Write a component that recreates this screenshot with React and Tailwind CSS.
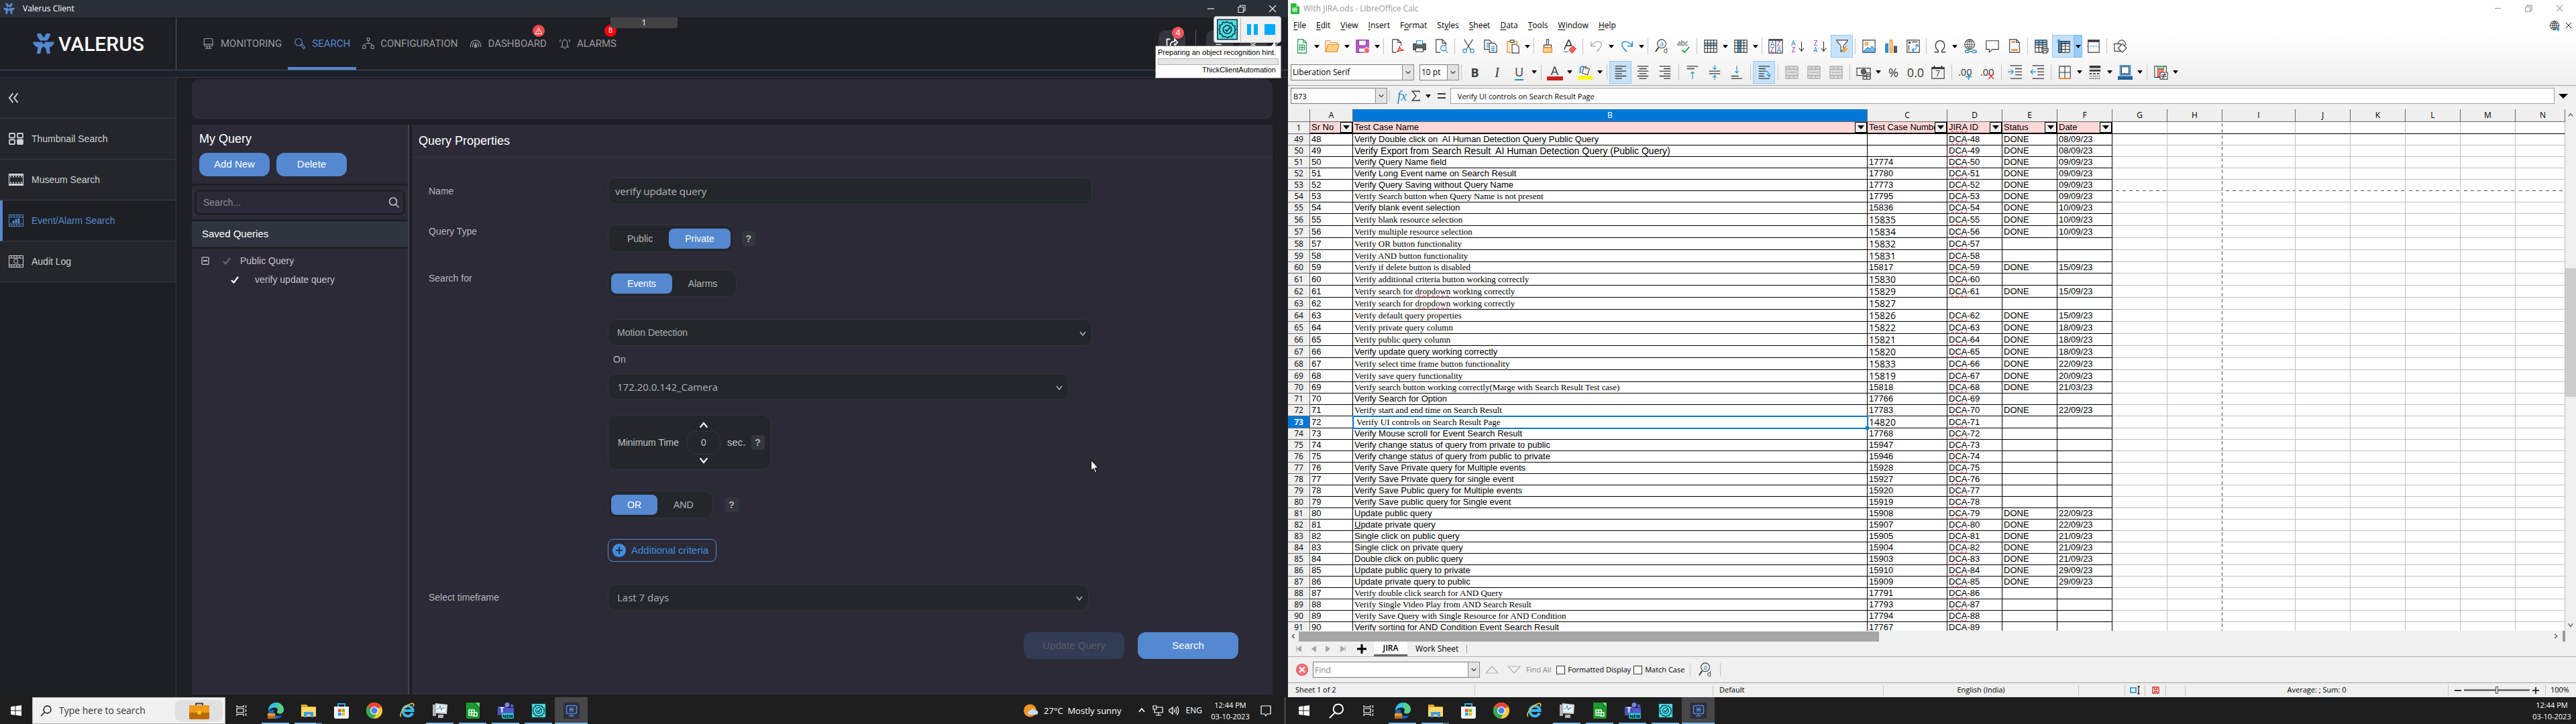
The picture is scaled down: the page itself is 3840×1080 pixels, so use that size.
import React from "react";

const SEG = "font-['Open_Sans',sans-serif]";

/* ---------- shared icon helpers ---------- */
function Ic({ children, className = "w-6 h-6", vb = "0 0 24 24", sw = 1.2 }) {
  return (
    <svg viewBox={vb} className={className + " shrink-0 overflow-visible"} fill="none" stroke="currentColor" strokeWidth={sw} aria-hidden="true">
      {children}
    </svg>
  );
}
const B = "#1e8bcd";
const K = "#3a3a38";

function ValerusMark({ className }) {
  return (
    <svg viewBox="0 0 32 30" className={className} fill="#5488d0" aria-hidden="true">
      <path d="M6 0h6l4 6.500L20 0h6c-.6 5-2.600 8.500-5.500 10.800h-9C8.600 8.500 6.600 5 6 0z" />
      <path d="M0 12.500h13.500L16 16v3l-3.200 3.500L11 30H6l1.300-9.500C3.500 19.500.8 17 0 12.500z" />
      <path d="M32 12.500H18.500L16 16v3l3.200 3.500L21 30h5l-1.300-9.500c3.800-1 6.500-3.500 7.300-8z" />
      <path d="M12.500 10.800L16 15l3.500-4.200z" fill="#1e1f24" />
    </svg>
  );
}

function Gear({ className }) {
  return (
    <svg viewBox="0 0 30 30" className={className} fill="none" stroke="#12404a" aria-hidden="true">
      <rect x="0.750" y="0.750" width="28.500" height="28.500" fill="#4fe0e6" stroke="#0e3440" strokeWidth="1.500" />
      <path d="M15 4l3 2 3.500-.5 1.200 3.300 3.300 1.200-.5 3.500L27 15l-1.500 2.500.5 3.500-3.300 1.200-1.200 3.300L18 25l-3 2-3-2-3.500.5-1.200-3.300L4 21l.5-3.500L3 15l1.500-2.500L4 9l3.300-1.200L8.500 4.500 12 5z" strokeWidth="1.700" />
      <circle cx="15" cy="15" r="6" strokeWidth="1.700" />
      <path d="M12 15l2.300 2.500L19 12" strokeWidth="1.900" />
    </svg>
  );
}

const Chev = ({ className = "w-3 h-3", d = "M2 4l4 4 4-4" }) => (
  <svg viewBox="0 0 12 12" className={className} fill="none" stroke="currentColor" strokeWidth="1.600" aria-hidden="true">
    <path d={d} />
  </svg>
);
const UP = "M2 8l4-5 4 5";
const DOWN = "M2 4l4 5 4-5";

/* ---------- Valerus client ---------- */
const NAV = [
  {
    t: "MONITORING",
    i: <><rect x="3" y="2" width="17" height="15" rx="2.500" /><path d="M3 13.500h17M9 17v4M14 17v4M5 21.500h13" /></>,
  },
  { t: "SEARCH", on: true, i: <><circle cx="9.500" cy="9" r="7" /><path d="M14 14.500l3-1 5 6-2 2.500-5-5z" /></> },
  {
    t: "CONFIGURATION",
    i: <><rect x="9.500" y="1" width="5" height="5" rx="1" /><rect x="1" y="16" width="5.500" height="6" rx="1" /><rect x="17.500" y="16" width="5.500" height="6" rx="1" /><path d="M12 6v5M4 16c0-3 3-4.500 8-5 5 .5 8 2 8 5" /></>,
  },
  {
    t: "DASHBOARD",
    badge: "tri",
    i: <><path d="M2 19v-4a10 9.500 0 0 1 20 0v4M6 19v-3.500a6 6 0 0 1 3-5M18 19v-3.500a6 6 0 0 0-3-5" /><circle cx="12" cy="17" r="2.500" fill="currentColor" /><path d="M12 15V9" strokeWidth="2" /></>,
  },
  {
    t: "ALARMS",
    badge: "8",
    i: <><path d="M7 17V10a5 5 0 0 1 10 0v7l2 2H5zM12 5V2.500M10.500 22h3M4 4C2.500 5.500 2 7 2 9M20 4c1.500 1.500 2 3 2 5" /></>,
  },
];

const Film = ({ children }) => (
  <Ic className="w-[22px] h-[18px]" vb="0 0 22 18" sw={1}>
    <rect x="0.500" y="0.500" width="21" height="17" />
    <path d="M0 4h22M0 14h22M4 0v4M8 0v4M12 0v4M16 0v4M4 14v4M8 14v4M12 14v4M16 14v4" />
    {children}
  </Ic>
);
const SIDE = [
  {
    t: "Thumbnail Search",
    i: (
      <Ic className="w-[22px] h-[18px]" vb="0 0 22 18" sw={1.8}>
        <rect x="1" y="1" width="8" height="6.500" rx="1" /><rect x="13" y="1" width="8" height="6.500" rx="1" />
        <rect x="1" y="10.500" width="8" height="6.500" rx="1" /><rect x="13" y="10.500" width="8" height="6.500" rx="1" fill="currentColor" />
      </Ic>
    ),
  },
  {
    t: "Museum Search",
    i: (
      <Ic className="w-[22px] h-[18px]" vb="0 0 22 18" sw={1.2}>
        <path d="M.5 0v18M21.500 0v18" /><path d="M0 1.500h22M0 16.500h22" strokeWidth="3" /><path d="M2 4.500h18M2 13.500h18" strokeDasharray="2 2" strokeWidth="1.800" />
      </Ic>
    ),
  },
  { t: "Event/Alarm Search", on: true, i: <Film><path d="M6 12.500h2v-3H6zM10 12.500h2V7h-2zM14 12.500h2V6h-2z" fill="currentColor" /></Film> },
  { t: "Audit Log", i: <Film><circle cx="10.500" cy="8.500" r="3" /><path d="M12.500 11l2 2" /></Film> },
];

const pill = "h-[30px] rounded-lg px-6 text-sm";
function Toggle({ label, items, active }) {
  return (
    <div role="group" aria-label={label} className="flex h-[41px] items-center rounded-xl border border-[#34343c] bg-[#23272b] px-1">
      {items.map((t) => (
        <button key={t} aria-pressed={t === active} className={pill + (t === active ? " bg-[#5488d0] text-white" : " text-[#b4b5b8]")}>
          {t}
        </button>
      ))}
    </div>
  );
}
const Help = ({ ml = "" }) => (
  <button aria-label="Help" className={"h-[22px] w-5 rounded bg-[#33373d] text-sm font-bold text-[#b4b5b8] " + ml}>?</button>
);
function DarkSelect({ id, label, value, width, font = "" }) {
  return (
    <div className={"relative max-w-full text-[#aeb0b3] " + width}>
      <select id={id} aria-label={label} className={"h-10 w-full appearance-none rounded-xl border border-[#34343c] bg-[#23272b] px-[13px] " + font}>
        <option>{value}</option>
      </select>
      <Chev className="pointer-events-none absolute right-2 top-[15px] h-3 w-3" d={DOWN} />
    </div>
  );
}
const Row = ({ label, htmlFor, className, lab = "", children }) => (
  <div className={"grid grid-cols-[267px_1fr] " + className}>
    {label ? <label htmlFor={htmlFor} className={"text-sm leading-5 text-[#b4b5b8] " + lab}>{label}</label> : <span />}
    <div className="flex items-center">{children}</div>
  </div>
);
const blueBtn = "rounded-xl bg-[#5488d0] text-[15px] text-white";

function Valerus() {
  return (
    <section className="relative flex min-h-0 min-w-0 flex-1 flex-col bg-[#1e1f24] font-['Liberation_Sans',sans-serif]">
      <div className={"flex h-[26px] items-center bg-[#2a2e36] pl-1 text-xs text-white " + SEG}>
        <ValerusMark className="h-4 w-[19px]" />
        <span className="ml-[11px]">Valerus Client</span>
        <div className="ml-auto flex text-[#e6e6e6]">
          <button aria-label="Minimize" className="flex w-[46px] justify-center"><Ic className="h-3 w-3" vb="0 0 12 12"><path d="M1 6h10" /></Ic></button>
          <button aria-label="Restore" className="flex w-[46px] justify-center"><Ic className="h-3 w-3" vb="0 0 12 12"><path d="M1 3.500h7.500v8H1zM3.500 3.500V1H11v8H8.500" /></Ic></button>
          <button aria-label="Close" className="flex w-[46px] justify-center"><Ic className="h-3 w-3" vb="0 0 12 12"><path d="M1 1l10 10M11 1L1 11" /></Ic></button>
        </div>
      </div>

      <header className="flex h-[79px] shrink-0 border-b border-[#55546e]">
        <div className="flex w-[263px] items-center border-r border-[#55546e] pl-[49px]">
          <ValerusMark className="h-[30px] w-8" />
          <span className="ml-[6px] font-['Roboto',sans-serif] text-[30px] font-medium text-white">VALERUS</span>
        </div>
        <nav className="flex pl-[30px] font-['Roboto',sans-serif] text-[15px]">
          {NAV.map((n) => (
            <a key={n.t} href="#" className={"relative flex items-center gap-[9px] px-[9px] " + (n.on ? "border-b-4 border-[#5488d0] pt-1 text-[#5488d0]" : "text-[#98999d]")}>
              <Ic className="h-[18px] w-[18px]" sw={1.6}>{n.i}</Ic>
              {n.t}
              {n.badge === "tri" && (
                <span className="absolute right-[12px] top-[11px] flex h-[18px] w-[18px] items-center justify-center rounded-full bg-[#f9484b] text-white">
                  <Ic className="h-3 w-3" sw={2}><path d="M12 3l10 18H2zM12 9v6M12 17v2" /></Ic>
                </span>
              )}
              {n.badge === "8" && (
                <span className="absolute right-[9px] top-[11px] flex h-[18px] w-[18px] items-center justify-center rounded-full bg-[#fb0007] text-[11px] text-white">8</span>
              )}
            </a>
          ))}
        </nav>
        <div className="ml-auto flex items-center pr-3">
          <button aria-label="Export" className="relative flex h-10 w-10 items-center justify-center rounded-xl bg-[#33373d] text-white">
            <Ic className="h-5 w-5" sw={2}><path d="M9 4H3v17h16v-5M9 16c0-6 3-8 8-8V4l5 6-5 5v-4" /></Ic>
            <span className="absolute -top-[5px] right-[2px] flex h-[18px] w-[18px] items-center justify-center rounded-full bg-[#fb5458] text-[13px]">4</span>
          </button>
          <span className="mx-[15px] h-10 w-px bg-[#55546e]" />
          <button aria-label="Layout" className="flex h-10 w-10 items-center justify-center rounded-xl bg-[#33373d] text-white">
            <Ic className="h-4 w-4" sw={2}><path d="M4 4h4v4H4zM12 4h4v4h-4zM4 14h12" /></Ic>
          </button>
          <button aria-label="User" className="ml-[10px] flex h-10 w-10 items-center justify-center rounded-xl bg-[#33373d] text-white">
            <Ic className="h-4 w-4" sw={2}><circle cx="12" cy="7" r="6" /><path d="M2 23c2-10 18-10 20 0" /></Ic>
          </button>
          <Chev className="ml-2 h-3 w-3 text-[#b4b5b8]" />
        </div>
      </header>
      <div className="h-[11px] shrink-0 border-b border-[#35363d] bg-[#1c2027]" />

      <div className="flex min-h-0 flex-1">
        <aside className="w-[263px] shrink-0 border-r border-[#3a3a41]">
          <button aria-label="Collapse" className="flex h-[61px] w-full items-center border-b border-[#393b41] bg-[#23272b] pl-3 text-[#d4d5d7]">
            <Ic className="h-4 w-4" vb="0 0 16 16" sw={2}><path d="M7.500 1L2 8l5.500 7M14.500 1L9 8l5.500 7" /></Ic>
          </button>
          {SIDE.map((s) => (
            <a key={s.t} href="#" className={"flex h-[61px] items-center gap-3 border-b border-[#393b41] text-sm " + (s.on ? "border-l-4 border-l-[#5488d0] bg-[#1e1f24] pl-[9px] text-[#5488d0]" : "bg-[#23272b] pl-[13px] text-[#cfd0d2]")}>
              {s.i}
              {s.t}
            </a>
          ))}
        </aside>

        <main className="flex min-w-0 flex-1 flex-col pb-1 pl-[23px] pr-[23px] pt-[2px]">
          <div className="h-[60px] shrink-0 rounded-xl bg-[#2c2a37]" />
          <div className="mt-2 flex min-h-0 flex-1">
            <section className="w-[322px] shrink-0 bg-[#2c2a37] text-[#c3c3c8]">
              <h2 className="pl-[11px] pt-[9px] text-lg leading-6 text-white">My Query</h2>
              <div className="mt-[9px] flex gap-[10px] pl-[11px]">
                <button className={blueBtn + " h-[35px] w-[105px]"}>Add New</button>
                <button className={blueBtn + " h-[35px] w-[105px]"}>Delete</button>
              </div>
              <div className="mt-[11px] border-y-[3px] border-[#1e1f24] px-1 py-[6px]">
                <div className="flex h-[38px] items-center rounded-lg border-[3px] border-[#1e1f24] pl-[10px] pr-[6px]">
                  <input aria-label="Search queries" placeholder="Search..." className="min-w-0 flex-1 bg-transparent text-sm placeholder:text-[#8e8e96]" />
                  <Ic className="h-4 w-4 text-[#c3c3c8]" vb="0 0 16 16" sw={1.6}><circle cx="7" cy="6.500" r="5.500" /><path d="M11 11l4.500 4.500" /></Ic>
                </div>
              </div>
              <h3 className="flex h-[38px] items-center bg-[#30343e] pl-[15px] text-[15px] text-white">Saved Queries</h3>
              <div className="border-t-[3px] border-[#1e1f24]">
                <div className="mt-1 flex h-7 items-center pl-[14px] text-sm">
                  <Ic className="h-3 w-3 text-[#c3c3c8]" vb="0 0 12 12" sw={1.3}><rect x="1" y="0.800" width="10" height="10.500" rx="1" /><path d="M3 6h6" strokeWidth="2" /></Ic>
                  <Ic className="ml-5 mr-[14px] h-3 w-3 text-[#6e6e77]" vb="0 0 12 12" sw={2}><path d="M1 7l3.500 3.500L11 2" /></Ic>
                  Public Query
                </div>
                <div className="flex h-7 items-center pl-[58px] text-sm">
                  <Ic className="mr-6 h-3 w-3 text-white" vb="0 0 12 12" sw={2.2}><path d="M1 7l3.500 3.500L11 2" /></Ic>
                  verify update query
                </div>
              </div>
            </section>
            <div className="w-[6px] shrink-0 border-l-2 border-[#45454c]" />

            <section className="min-w-0 flex-1 bg-[#2c2a37]">
              <h2 className="flex h-[49px] items-center border-b border-[#38383f] pl-[10px] text-lg text-white">Query Properties</h2>
              <div className="pl-[25px] pr-[51px]">
                <Row label="Name" htmlFor="qname" className="mt-[30px]" lab="self-center">
                  <input id="qname" defaultValue="verify update query" className={"h-10 w-[722px] rounded-xl border border-[#34343c] bg-[#23272b] px-[10px] text-[15px] text-[#b4b5b8] " + SEG} />
                </Row>
                <Row label="Query Type" className="mt-[30px]">
                  <Toggle label="Query Type" items={["Public", "Private"]} active="Private" />
                  <Help ml="ml-3" />
                </Row>
                <Row label="Search for" className="mt-[26px]" lab="pt-[3px]">
                  <Toggle label="Search for" items={["Events", "Alarms"]} active="Events" />
                </Row>
                <Row className="mt-[33px]">
                  <DarkSelect id="ev" label="Event" value="Motion Detection" width="w-[722px]" font="text-sm" />
                </Row>
                <Row className="mt-[10px]">
                  <span className="pl-2 text-sm leading-5 text-[#b4b5b8]">On</span>
                </Row>
                <Row className="mt-[11px]">
                  <DarkSelect id="cam" label="Camera" value="172.20.0.142_Camera" width="w-[687px]" font={"text-[15px] " + SEG} />
                </Row>
                <Row className="mt-[22px]">
                  <div className="flex h-[82px] items-center rounded-xl border border-[#34343c] bg-[#23272b] pl-[14px] pr-2 text-sm text-[#c3c3c8]">
                    <label htmlFor="mint">Minimum Time</label>
                    <div className="ml-3 flex w-[50px] flex-col items-center text-white">
                      <button aria-label="Increase"><Chev className="h-4 w-4" d={UP} /></button>
                      <input id="mint" defaultValue="0" className="h-[35px] w-full rounded-xl border border-[#34343c] bg-transparent text-center text-[#c3c3c8]" />
                      <button aria-label="Decrease"><Chev className="h-4 w-4" d={DOWN} /></button>
                    </div>
                    <span className="ml-[10px] text-[15px]">sec.</span>
                    <Help ml="ml-2" />
                  </div>
                </Row>
                <Row className="mt-[31px]">
                  <Toggle label="Operator" items={["OR", "AND"]} active="OR" />
                  <Help ml="ml-[18px]" />
                </Row>
                <Row className="mt-[31px]">
                  <button className="flex h-[34px] items-center gap-2 rounded-lg border border-[#5488d0] pl-[6px] pr-[11px] text-[15px] text-[#3f8ddf]">
                    <Ic className="h-5 w-5" vb="0 0 20 20"><circle cx="10" cy="10" r="9.500" fill="#3f8ddf" /><path d="M10 5v10M5 10h10" stroke="#2c2a37" strokeWidth="2" /></Ic>
                    Additional criteria
                  </button>
                </Row>
                <Row label="Select timeframe" htmlFor="tf" className="mt-[33px]" lab="self-center">
                  <DarkSelect id="tf" label="Select timeframe" value="Last 7 days" width="w-[717px]" font={"text-[15px] " + SEG} />
                </Row>
                <div className="mt-8 flex justify-end gap-5">
                  <button disabled className="h-10 w-[150px] rounded-xl bg-[#323c56] text-[15px] text-[#5c5a60]">Update Query</button>
                  <button className={blueBtn + " h-10 w-[150px]"}>Search</button>
                </div>
              </div>
            </section>
          </div>
        </main>
      </div>

      <div className={"absolute left-1/2 top-[26px] h-4 w-[100px] -translate-x-1/2 rounded-b bg-[#424245] text-center text-xs leading-4 text-white " + SEG}>1</div>

      <div className="absolute right-[10px] top-6 flex h-10 w-[101px] items-center rounded-sm border border-[#b5b5b5] bg-[#f0f0f0] pl-1">
        <Gear className="h-8 w-[31px]" />
        <span className="mx-1 h-9 w-px bg-[#b5b5b5]" />
        <button aria-label="Pause" className="ml-[5px] flex h-4 w-4 gap-1"><span className="h-4 flex-1 bg-[#00aaff]" /><span className="h-4 flex-1 bg-[#00aaff]" /></button>
        <button aria-label="Stop" className="ml-[10px] h-4 w-4 bg-[#00aaff]" />
      </div>
      <div className="absolute right-[10px] top-[68px] h-[49px] w-[188px] border border-[#7a7a7a] bg-white px-[3px] text-[11px] text-black">
        <svg viewBox="0 0 12 8" className="absolute -top-[7px] right-1 h-2 w-3" fill="#fff" aria-hidden="true"><path d="M1 8L8 0v8z" /></svg>
        <p className="whitespace-nowrap pr-1 text-right leading-[18px]">Preparing an object recognition hint.</p>
        <div className="h-[10px] border border-[#b5b5b5] bg-[#e6e6e6]" />
        <p className="pr-1 text-right leading-[14px]">ThickClientAutomation</p>
      </div>
      <svg viewBox="0 0 12 20" className="absolute left-[1626px] top-[686px] h-5 w-3" fill="#fff" stroke="#000" strokeWidth="1" aria-hidden="true">
        <path d="M.5.5v15.500l3.500-3.300 2.600 6.500 2.200-1-2.600-6.200h4.800z" />
      </svg>
    </section>
  );
}

/* ---------- Calc toolbars ---------- */
const Az = ({ x, y, c, children }) => <text x={x} y={y} fontSize="11" fill={c} stroke="none" fontFamily="Open Sans, sans-serif">{children}</text>;
const grid = "M2 6.500h20M2 11h20M2 15.500h20M7 2v20M12 2v20M17 2v20";
const findIcon = <><circle cx="12" cy="8" r="7" /><path d="M7 14l-5 7" strokeWidth="2.200" /><Az x="9" y="12" c={B}>a</Az><Az x="15" y="23" c={K}>d</Az></>;
const T1 = [
  ["New", <g stroke="#18a05a"><path d="M5 1h9l5 5v17H5zM14 1v5h5" stroke="#1a8f4c" /><path d="M8 10h8v8H8zM8 14h8M12 10v8" /></g>], "a",
  ["Open", <g stroke="#e8862d"><path d="M1 21V3h7l2 3h10v3" fill="#fff3dd" /><path d="M1 21L5 9h18l-3 12z" fill="#fbd283" /></g>], "a",
  ["Save", <g stroke="#8d2f9f"><path d="M2 2h20v20H2z" fill="#b864c8" /><path d="M6 2h12v9H6z" fill="#fff" /><path d="M6 15h10v7H6z" fill="#fff" /><circle cx="19" cy="19" r="4.500" fill="#f2666d" stroke="#fff" /></g>], "a", "|",
  ["Export as PDF", <><path d="M4 1h9l5 5v5M13 1v5h5M4 1v21h6" /><path d="M11 21c3-2 5-7 4.500-9 0 4 3 6 7 6.500-5 0-8 1-11.500 2.500z" stroke="#e03c31" strokeWidth="1.600" /></>],
  ["Print", <><path d="M2 8h20v10H2z" fill="#636361" /><path d="M7 3h10v6H7z" stroke={B} fill="#fff" /><path d="M6 15h12v6H6z" fill="#fff" /></>],
  ["Print Preview", <><path d="M10 22H3V1h10l6 6v4M13 1v6h6" /><circle cx="15" cy="15" r="4.500" stroke={B} fill="#eaf5fc" /><path d="M18 18.500l4 4" stroke={B} /></>], "|",
  ["Cut", <><path d="M5 1l11 17M19 1L8 18" /><g stroke={B}><circle cx="6" cy="19.500" r="3" /><circle cx="18" cy="19.500" r="3" /></g></>],
  ["Copy", <><path d="M9 17H2V2h8l4 4" /><path d="M10 7h8l4 4v11H10z" fill="#fff" /><path d="M13 13h6M13 16h6M13 19h6M5 7h4M5 10h4M5 13h4" stroke={B} /></>],
  ["Paste", <><path d="M9 22H3V4h16v4" stroke="#e8862d" fill="#fdeccb" /><path d="M8 2h6v4H8z" fill="#fff" /><path d="M11 9h7l4 4v10H11z" fill="#fff" /></>], "a", "|",
  ["Clone Formatting", <><path d="M10.500 1h3v9h-3zM6 10h12v4H6z" fill="#fff" /><path d="M5 14h14v8H5z" fill="#fbd283" stroke="#e8862d" /></>],
  ["Clear Formatting", <><path d="M3 17L10 2h1l4 10M6 11h8" strokeWidth="1.800" /><path d="M2 21h8" stroke={B} /><path d="M11 18l6-6 5 4-6 7z" fill="#f2666d" stroke="#d33" /></>], "|",
  ["Undo", <path d="M3 4v8h8M3 12C8 3 19 2 20 9c0 5-5 8-8 12" stroke="#b4b4b4" strokeWidth="1.600" />], "a",
  ["Redo", <path d="M21 4v8h-8M21 12C16 3 5 2 4 9c0 5 5 8 8 12" stroke={B} strokeWidth="1.600" />], "a", "|",
  ["Find & Replace", findIcon],
  ["Spelling", <><Az x="1" y="11" c={K}>abc</Az><path d="M9 18l4 4 8-9" stroke="#28a05a" strokeWidth="2" /></>], "|",
  ["Row", <><path d="M2 7h20v5H2z" fill="#7cc0f0" stroke="none" /><path d="M2 2h20v20H2z" /><path d={grid} /></>], "a",
  ["Column", <><path d="M7 2h6v20H7z" fill="#4aa8e8" stroke="none" /><path d="M2 2h20v20H2z" /><path d={grid} /></>], "a", "|",
  ["Sort", <><path d="M1 1h22v22H1zM12 2v21" /><path d="M1 2h22" strokeWidth="2" /><Az x="3" y="12" c={B}>A</Az><Az x="14" y="12" c="#a33bb5">Z</Az><Az x="3" y="22" c="#a33bb5">Z</Az><Az x="14" y="22" c={B}>A</Az></>],
  ["Sort Ascending", <><Az x="1" y="11" c={B}>A</Az><Az x="2" y="22" c="#a33bb5">Z</Az><path d="M18 4v16M14 15l4 5 4-5" /></>],
  ["Sort Descending", <><Az x="2" y="11" c="#a33bb5">Z</Az><Az x="1" y="22" c={B}>A</Az><path d="M18 4v16M14 15l4 5 4-5" /></>],
  ["AutoFilter", <><path d="M3 2h18c-1 5-7 7-7 10v6l-4 3v-9C10 9 4 7 3 2z" fill="#fff" /><path d="M19 11l-7 7h4l-2 5 7-7h-4z" fill="#fbb03b" stroke="#e8862d" strokeWidth=".8" /></>, "on"], "|",
  ["Image", <><path d="M2 2h20v20H2z" /><circle cx="8" cy="8" r="2.500" stroke="#e8862d" fill="#fbd283" /><path d="M3 21l7-7 3 3 4-5 5 6v3z" fill="#7cc0f0" stroke={B} /></>],
  ["Chart", <><path d="M3 8h4v14H3z" fill="#2f8fd8" stroke={B} /><path d="M10 2h4v20h-4z" fill="#fbd283" stroke="#e8862d" /><path d="M17 12h4v10h-4z" fill="#636361" /></>],
  ["Pivot Table", <><path d="M2 2h20v20H2z" /><path d="M5 5h2v2H5zM10 5h9M5 10v9" /><path d="M10 18c5 1 8-2 8-8M13 15l-3 3 3 3M15 12l3-3 3 3" stroke={B} /></>], "|",
  ["Special Character", <path d="M3 21.500h6v-3C2 14 4 3 12 3s10 11 3 15.500v3h6" strokeWidth="1.500" />], "a",
  ["Hyperlink", <><circle cx="11" cy="9" r="8" /><path d="M3 9h16M11 1v16M5 4.500h12M5 13h12M11 1C6 5 6 13 11 17M11 1c5 4 5 12 0 16" strokeWidth=".9" /><path d="M10 18.500h-4a2 2 0 0 0 0 4h4M16 18.500h4a2 2 0 0 1 0 4h-4M9 20.500h8" stroke={B} strokeWidth="1.600" /></>],
  ["Comment", <path d="M2 3h20v14H12l-5 5v-5H2z" />],
  ["Headers and Footers", <><path d="M4 1h11l5 5v16H4zM15 1v5h5" /><path d="M7 5h6M7 18h10" stroke="#e8862d" strokeWidth="2.500" /></>], "|",
  ["Define Print Area", <><path d="M2 2h19v8H2z" fill="#7cc0f0" stroke="none" /><path d="M2 2h19v20H2zM2 6h19M2 10h19M2 14h19M8 2v20M14 2v20" /><path d="M13 16h10v5H13z" fill="#fff" /><path d="M15 13h6v3h-6zM15 19h6v4h-6z" fill="#fff" /></>],
  ["Freeze Rows and Columns", <><path d="M4 4h18v18H4z" fill="#fff" /><path d="M4 4h18v4H4zM4 4h5v18H4z" fill="#4aa8e8" /><path d="M4 12h18M4 17h18M9 4v18M15 4v18" /><path d="M4 0v7M1 1.500l6 4M7 1.500l-6 4" stroke={B} /></>, "on"], "A",
  ["Split Window", <><path d="M3 2h18v20H3z" /><path d="M3 3.500h18" strokeWidth="3.500" /><path d="M1 12h22" stroke={B} strokeDasharray="3 1.500" /></>], "|",
  ["Show Draw Functions", <><circle cx="14" cy="8" r="6" /><path d="M2 8h10v12H2z" fill="#f8f8f8" /><path d="M15 8l7 7-7 7-7-7z" fill="#f8f8f8" /></>],
];
const lines = (a) => <path d={a.map(([x, y, w]) => `M${x} ${y}h${w}`).join("")} strokeWidth="1.500" />;
const merge = <g stroke="#a9a9a9"><path d="M2 2h20v20H2z" fill="#dcdcdc" /><path d="M2 7h20M2 17h20M8 2v5M15 2v5M8 17v5M15 17v5M5 12h14" /></g>;
const decimals = <text x="0" y="17" fontSize="16" fill={K} stroke="none" fontFamily="Open Sans, sans-serif">.00</text>;
const T2 = [
  ["Bold", <span className="text-lg font-bold leading-6">B</span>, "txt"],
  ["Italic", <span className="font-['Liberation_Serif',serif] text-xl italic leading-6">I</span>, "txt"],
  ["Underline", <span className="border-b-2 border-[#1e8bcd] text-lg leading-[22px]">U</span>, "txt"], "a", "|",
  ["Font Color", <span className="flex w-6 flex-col items-center border-b-[6px] border-[#c9211e] text-lg leading-[18px]">A</span>, "txt"], "a",
  ["Highlighting Color", <><path d="M10 3l9 3-3 10-9-3zM13 1v6" /><path d="M4 4v9M4 4c3-2 5-2 6-1" stroke={B} strokeWidth="2" /><path d="M0 20.500h24" stroke="#ff0" strokeWidth="6" /></>], "a", "|",
  ["Align Left", lines([[3, 2, 18], [3, 6, 11], [3, 10, 18], [3, 14, 11], [3, 18, 18], [3, 22, 11]]), "on"],
  ["Align Center", lines([[3, 2, 18], [6, 6, 12], [3, 10, 18], [6, 14, 12], [3, 18, 18], [6, 22, 12]])],
  ["Align Right", lines([[3, 2, 18], [10, 6, 11], [3, 10, 18], [10, 14, 11], [3, 18, 18], [10, 22, 11]])], "|",
  ["Align Top", <>{lines([[3, 2, 18], [3, 6, 12]])}<path d="M12 23V11M9 14l3-3 3 3" stroke={B} /></>],
  ["Center Vertically", <>{lines([[3, 10, 18], [3, 14, 18]])}<path d="M12 0v7M9 4l3 3 3-3M12 24v-7M9 20l3-3 3 3" stroke={B} /></>],
  ["Align Bottom", <>{lines([[3, 18, 12], [3, 22, 18]])}<path d="M12 1v12M9 10l3 3 3-3" stroke={B} /></>], "|",
  ["Wrap Text", <>{lines([[3, 2, 18], [3, 6, 11], [3, 10, 11], [3, 14, 9], [3, 18, 9], [3, 22, 18]])}<path d="M13 10c5 0 7 2 7 8M16 15l4 4 3-4" stroke={B} /></>, "on"], "|",
  ["Merge and Center Cells", merge], ["Merge Cells", merge], ["Unmerge Cells", merge], "|",
  ["Currency", <><path d="M1 5h22v12H1z" /><circle cx="12" cy="11" r="4" fill="#636361" /><path d="M11 19h6v4h-6zM17 13h6v10h-6zM17 16h6M17 19h6" fill="#f4f4f4" /></>], "a",
  ["Percent", <span className="text-lg leading-6">%</span>, "txt"],
  ["Number", <span className="text-lg leading-6">0.0</span>, "txt"],
  ["Date", <><path d="M2 4h20v18H2z" /><path d="M2 5h20" strokeWidth="3.500" /><path d="M6 1v4M18 1v4" strokeWidth="2" /><text x="8" y="19" fontSize="13" fill={K} stroke="none" fontFamily="Open Sans, sans-serif">7</text></>], "|",
  ["Add Decimal Place", <>{decimals}<path d="M17 14v10M12 19h10" stroke={B} strokeWidth="1.600" /></>],
  ["Delete Decimal Place", <>{decimals}<path d="M13 14l9 9M22 14l-9 9" stroke="#e03c31" strokeWidth="1.600" /></>], "|",
  ["Increase Indent", <>{lines([[4, 1, 19], [12, 6, 11], [12, 11, 11], [12, 16, 11], [4, 22, 19]])}<path d="M0 11h9M5 7l4 4-4 4" stroke={B} /></>],
  ["Decrease Indent", <>{lines([[4, 1, 19], [12, 6, 11], [12, 11, 11], [12, 16, 11], [4, 22, 19]])}<path d="M10 11H1M5 7l-4 4 4 4" stroke={B} /></>], "|",
  ["Borders", <><path d="M3 2v20M21 2v20M3 2h18M12 2v20M3 12h18" /><path d="M3 22h18" stroke="#e8862d" strokeWidth="2" /></>], "a",
  ["Border Style", <><path d="M3 3h18" strokeWidth="4" /><path d="M3 9h18" strokeWidth="3" /><path d="M3 14h18" strokeWidth="2" strokeDasharray="4 2" /><path d="M3 18h18M3 22h18" strokeDasharray="2 1" /></>], "a",
  ["Border Color", <><path d="M4 1h16v15H4z" stroke={B} strokeWidth="2" fill="#fff" /><path d="M6 3h12v11H6z" /><path d="M0 21h24" stroke="#2a6099" strokeWidth="6" /></>], "a", "|",
  ["Conditional", <><path d="M2 2h19v18H2z" fill="#fff" /><path d="M7 2h10v5H7z" fill="#9fd8a8" stroke="#28a05a" /><path d="M7 7h9v12H7z" fill="#f28b8b" stroke="#d33" /><path d="M11 12h12v11H11z" fill="#fff" /><path d="M13 16h8M13 19h8M19 13l-4 9" /></>], "a",
];

const Tri = () => <span className="block h-0 w-0 border-x-4 border-t-[5px] border-x-transparent border-t-black" />;
function Tools({ items, sep }) {
  return items.map((it, k) => {
    if (it === "|") return <span key={k} className={"flex shrink-0 justify-center " + sep}><span className="h-6 w-px bg-[#c4c4c4]" /></span>;
    if (it === "a" || it === "A")
      return (
        <button key={k} aria-label="More" className={"flex h-[34px] w-3 shrink-0 items-center justify-center " + (it === "A" ? "border border-[#7abcf5] bg-[#99cdfb]" : "")}>
          <Tri />
        </button>
      );
    return (
      <button key={k} aria-label={it[0]} className={"flex h-[34px] w-[33px] shrink-0 items-center justify-center text-[#3a3a38] " + (it[2] === "on" ? "border border-[#92c9f5] bg-[#c7e2f8]" : "")}>
        {it[2] === "txt" ? it[1] : <Ic className="h-[22px] w-[22px]">{it[1]}</Ic>}
      </button>
    );
  });
}
const DropBox = () => (
  <span className="pointer-events-none absolute inset-y-0 right-0 flex w-[18px] items-center justify-center border border-[#8a8a8a] bg-[#e3e3e3] text-[#444]">
    <Chev className="h-[10px] w-[10px]" />
  </span>
);
function CalcSelect({ label, value, width }) {
  return (
    <div className={"relative " + width}>
      <select aria-label={label} className="h-6 w-full appearance-none border border-[#7a7a7a] bg-white px-[2px] text-xs">
        <option>{value}</option>
      </select>
      <DropBox />
    </div>
  );
}

/* ---------- Calc sheet data: row | font | name | number | jira | date ---------- */
const DATA = `49|a|Verify Double click on  AI Human Detection Query Public Query||48|08/09/23
50|b|Verify Export from Search Result  AI Human Detection Query (Public Query)||49|08/09/23
51|a|Verify Query Name field|17774|50|09/09/23
52|a|Verify Long Event name on Search Result|17780|51|09/09/23
53|a|Verify Query Saving without Query Name|17773|52|09/09/23
54|s|Verify Search button when Query Name is not present|17795|53|09/09/23
55|a|Verify blank event selection|15836|54|10/09/23
56|S|Verify blank resource selection|15835|55|10/09/23
57|S|Verify multiple resource selection|15834|56|10/09/23
58|S|Verify OR button functionality|15832|57|
59|S|Verify AND button functionality|15831|58|
60|s|Verify if delete button is disabled|15817|59|15/09/23
61|S|Verify additional criteria button working correctly|15830|60|
62|S|Verify search for dropdown working correctly|15829|61|15/09/23
63|S|Verify search for dropdown working correctly|15827||
64|S|Verify default query properties|15826|62|15/09/23
65|S|Verify private query column|15822|63|18/09/23
66|S|Verify public query column|15821|64|18/09/23
67|A|Verify update query working correctly|15820|65|18/09/23
68|S|Verify select time frame button functionality|15833|66|22/09/23
69|S|Verify save query functionality|15819|67|20/09/23
70|s|Verify search button working correctly(Marge with Search Result Test case)|15818|68|21/03/23
71|a|Verify Search for Option|17766|69|
72|s|Verify start and end time on Search Result|17783|70|22/09/23
73|S| Verify UI controls on Search Result Page|14820|71|
74|a|Verify Mouse scroll for Event Search Result|17768|72|
75|a|Verify change status of query from private to public|15947|73|
76|a|Verify change status of query from public to private|15946|74|
77|a|Verify Save Private query for Multiple events|15928|75|
78|a|Verify Save Private query for single event|15927|76|
79|a|Verify Save Public query for Multiple events|15920|77|
80|a|Verify Save public query for Single event|15919|78|
81|a|Update public query|15908|79|22/09/23
82|u|Update private query|15907|80|22/09/23
83|a|Single click on public query|15905|81|21/09/23
84|a|Single click on private query|15904|82|21/09/23
85|a|Double click on public query|15903|83|21/09/23
86|a|Update public query to private|15910|84|29/09/23
87|a|Update private query to public|15909|85|29/09/23
88|s|Verify double click search for AND Query|17791|86|
89|s|Verify Single Video Play from AND Search Result|17793|87|
90|s|Verify Save Query with Single Resource for AND Condition|17794|88|
91|a|Verify sorting for AND Condition Event Search Result|17767|89|`
  .split("\n")
  .map((l) => l.split("|"));

const EMPTY = ["G", "H", "I", "J", "K", "L", "M", "N"];
const wavy = "underline decoration-red-600 decoration-wavy decoration-1 underline-offset-1";
const cell = "overflow-hidden whitespace-pre border-b border-r border-black p-0 pl-[2px] leading-4";
/* page-break guides */
const dashV = "border-r-0 bg-[repeating-linear-gradient(180deg,transparent_0_2px,#555_2px_7px,transparent_7px_9px)] bg-[length:1px_100%] bg-right bg-no-repeat";
const dashH = "border-b-0 bg-[repeating-linear-gradient(90deg,transparent_0_5px,#555_5px_10px)] bg-[length:100%_1px] bg-bottom bg-no-repeat";

function NameText({ kind, text }) {
  if (kind === "u") return <><u>{text[0]}</u>{text.slice(1)}</>;
  const at = text.indexOf("dropdown");
  if (at < 0) return text;
  return <>{text.slice(0, at)}<span className={wavy}>dropdown</span>{text.slice(at + 8)}</>;
}

function Sheet() {
  const head = "h-[19px] border-b border-r border-[#696969] p-0 text-xs font-normal leading-4 " + SEG;
  const filters = ["Sr No", "Test Case Name", "Test Case Number", "JIRA ID", "Status", "Date"];
  return (
    <table className="w-full table-fixed border-separate border-spacing-0 bg-white text-[13px] text-black">
      <colgroup>
        <col className="w-[33px]" /><col className="w-16" /><col className="w-[767px]" /><col className="w-[119px]" />
        <col className="w-[82px]" /><col className="w-[82px]" /><col className="w-[82px]" /><col className="w-[82px]" /><col className="w-[82px]" />
        <col className="w-[109px]" /><col className="w-[82px]" /><col className="w-[82px]" /><col className="w-[82px]" /><col className="w-[82px]" /><col />
      </colgroup>
      <thead>
        <tr className="bg-[#efefef]">
          <th className={head} />
          {["A", "B", "C", "D", "E", "F", ...EMPTY].map((c) => (
            <th key={c} className={head + (c === "B" ? " bg-[#0078d7] text-white" : "") + (c === "N" ? " pl-2" : "")}>{c}</th>
          ))}
        </tr>
        <tr>
          <th className={"h-[18px] border-b border-r border-[#696969] bg-[#efefef] p-0 text-xs font-normal leading-4 " + SEG}>1</th>
          {filters.map((f) => (
            <th key={f} className="h-[18px] border-b-2 border-r border-black bg-[#ffd7d7] p-0 font-normal">
              <div className="flex h-4 overflow-hidden pl-[2px] leading-4">
                <span className="min-w-0 flex-1 overflow-hidden whitespace-nowrap text-left">
                  {f === "JIRA ID" ? <><span className={wavy}>JIRA</span> ID</> : f}
                </span>
                <button aria-label={"Filter " + f} className="flex h-4 w-[18px] items-center justify-center border border-black bg-[#efefef]"><span className="h-0 w-0 border-x-[5px] border-t-[6px] border-x-transparent border-t-black" /></button>
              </div>
            </th>
          ))}
          {EMPTY.map((c) => (
            <td key={c} className={"border-b border-b-black " + (c === "H" ? dashV : "border-r border-r-[#c0c0c0]")} />
          ))}
        </tr>
      </thead>
      <tbody>
        {DATA.map(([n, k, name, num, jira, date]) => {
          const tall = k === "S" || k === "A";
          const h = tall ? " h-[18px]" : " h-[17px]";
          const sel = n === "73";
          const serif = k === "S" || k === "s";
          return (
            <tr key={n}>
              <th className={"border-b border-r border-[#696969] p-0 text-xs leading-4 " + SEG + h + (sel ? " bg-[#0078d7] font-bold text-white" : " bg-[#efefef] font-normal")}>{n}</th>
              <td className={cell + h}>{Number(n) - 1}</td>
              <td className={cell + h + (serif ? " font-['Liberation_Serif',serif]" : "") + (k === "b" ? " text-sm leading-4" : "") + (sel ? " relative overflow-visible outline-2 -outline-offset-1 outline-[#0078d7]" : "")}>
                <NameText kind={k} text={name} />
                {sel && <span className="absolute -bottom-[3px] -right-[3px] h-[5px] w-[5px] bg-[#0078d7]" />}
              </td>
              <td className={cell + h + (tall ? " text-sm leading-4 " + SEG : "")}>{num}</td>
              <td className={cell + h}>{jira && <><span className={wavy}>DCA</span>-{jira}</>}</td>
              <td className={cell + h}>{date && "DONE"}</td>
              <td className={cell + h}>{date}</td>
              {EMPTY.map((c) => {
                if (c === "H") return <td key={c} className={"border-b border-b-[#c0c0c0] " + dashV} />;
                return <td key={c} className={"border-r border-r-[#c0c0c0] " + (n === "53" ? dashH : "border-b border-b-[#c0c0c0]")} />;
              })}
            </tr>
          );
        })}
      </tbody>
    </table>
  );
}

const MENU = [["File", 0], ["Edit", 0], ["View", 0], ["Insert", 0], ["Format", 1], ["Styles", 2], ["Sheet", 0], ["Data", 0], ["Tools", 0], ["Window", 0], ["Help", 0]];
const VSep = () => <span className="h-4 w-px shrink-0 bg-[#c4c4c4]" />;

function Calc() {
  return (
    <section className="flex min-h-0 min-w-0 flex-1 flex-col bg-[#f0f0f0] font-['Liberation_Sans',sans-serif]">
      <div className={"shrink-0 border-b border-[#a0a0a0] bg-linear-to-b from-white from-40% to-[#efefef] text-xs text-black " + SEG}>
        <div className="flex h-[25px] items-center pl-[3px] text-[#999]">
          <svg viewBox="0 0 14 16" className="h-4 w-[14px]" aria-hidden="true"><path d="M1 0h8l5 5v11H1z" fill="#2db83d" /><path d="M9 0l5 5H9z" fill="#a6e8ad" /><path d="M4 7h6v5H4zM4 9.500h6M7 7v5" fill="none" stroke="#fff" /></svg>
          <span className="ml-[6px]">WIth JIRA.ods - LibreOffice Calc</span>
          <div className="ml-auto flex pr-[2px]">
            <button aria-label="Minimize" className="flex w-[46px] justify-center"><Ic className="h-[11px] w-[11px]" vb="0 0 12 12"><path d="M1 6h10" /></Ic></button>
            <button aria-label="Restore" className="flex w-[46px] justify-center"><Ic className="h-[11px] w-[11px]" vb="0 0 12 12"><path d="M1 3.500h7.500v8H1zM3.500 3.500V1H11v8H8.500" /></Ic></button>
            <button aria-label="Close" className="flex w-[46px] justify-center"><Ic className="h-[11px] w-[11px]" vb="0 0 12 12"><path d="M1 1l10 10M11 1L1 11" /></Ic></button>
          </div>
        </div>
        <div className="flex h-[25px] items-center gap-[15px] pl-2">
          {MENU.map(([m, u]) => (
            <button key={m}>{m.slice(0, u)}<span className="underline underline-offset-2">{m[u]}</span>{m.slice(u + 1)}</button>
          ))}
          <div className="ml-auto flex items-center gap-2 pr-[6px]">
            <Ic className="h-4 w-4 text-[#3a3a38]" sw={1.5}><circle cx="12" cy="12" r="10" /><path d="M2 12h20M12 2v20M4 7h16M4 17h16M12 2C6 7 6 17 12 22M12 2c6 5 6 15 0 20" /><path d="M20 13v9M17 19l3 4 3-4" stroke={B} strokeWidth="2" /></Ic>
            <button aria-label="Close document"><Ic className="h-[10px] w-[10px]" vb="0 0 12 12"><path d="M1 1l10 10M11 1L1 11" /></Ic></button>
          </div>
        </div>
        <div className="flex h-[38px] items-center pl-1"><Tools items={T1} sep="w-[7px]" /></div>
        <div className="flex h-[39px] items-center pl-1">
          <CalcSelect label="Font name" value="Liberation Serif" width="mr-2 w-[184px]" />
          <CalcSelect label="Font size" value="10 pt" width="w-[59px]" />
          <span className="mx-[3px] h-6 w-px bg-[#c4c4c4]" />
          <Tools items={T2} sep="w-2" />
        </div>
      </div>

      <div className={"flex h-[35px] shrink-0 items-start pl-1 pt-[3px] text-[11px] text-black " + SEG}>
        <div className="relative w-[144px]">
          <input aria-label="Name Box" defaultValue="B73" className="h-6 w-full border border-[#7a7a7a] bg-white px-[3px]" />
          <DropBox />
        </div>
        <div className="flex h-6 w-[94px] items-center pl-[3px] text-[#3a3a38]">
          <span className="h-4 w-px bg-[#c4c4c4]" />
          <button aria-label="Function Wizard" className="ml-2 w-5 font-['Liberation_Serif',serif] text-xl italic leading-6 text-[#1e8bcd]">fx</button>
          <button aria-label="Select Function" className="ml-1"><Ic className="h-4 w-[13px]" vb="0 0 13 16" sw={1.3}><path d="M12 3V1H1l6 7-6 7h11v-2" /></Ic></button>
          <span className="ml-2"><Tri /></span>
          <button aria-label="Formula" className="ml-[10px]"><Ic className="h-3 w-3" vb="0 0 12 12" sw={2}><path d="M0 3h12M0 9h12" /></Ic></button>
        </div>
        <input aria-label="Input line" defaultValue=" Verify UI controls on Search Result Page" className="h-6 min-w-0 flex-1 border border-[#a0a0a0] bg-white px-[7px]" />
        <button aria-label="Expand Formula Bar" className="flex h-6 w-8 items-center pl-[6px]"><span className="h-0 w-0 border-x-[7px] border-t-[7px] border-x-transparent border-t-black" /></button>
      </div>

      <div className="flex min-h-0 flex-1">
        <div className="min-w-0 flex-1 overflow-hidden"><Sheet /></div>
        <div className="flex w-4 shrink-0 flex-col items-center bg-[#f0f0f0] text-[#555]">
          <Chev className="mt-1 h-[10px] w-[10px]" d={UP} />
          <div className="h-[223px]" />
          <div className="h-48 w-full bg-[#cdcdcd]" />
          <Chev className="mb-1 mt-auto h-[10px] w-[10px]" d={DOWN} />
        </div>
      </div>

      <div className="flex h-4 shrink-0 items-center pr-4 text-[#555]">
        <Chev className="mx-[3px] h-[10px] w-[10px]" d="M8 2L4 6l4 4" />
        <div className="h-[15px] w-[865px] bg-[#a6a6a6]" />
        <Chev className="ml-auto mr-[5px] h-[10px] w-[10px]" d="M4 2l4 4-4 4" />
        <div className="h-4 w-1 bg-[#999]" />
      </div>

      <div className={"flex h-[23px] shrink-0 items-center border-b border-[#b0b0b0] pl-[5px] text-xs text-black " + SEG}>
        {["M11 2v10L4 7zM3 2v10", "M11 2v10L4 7z", "M3 2v10l7-5z", "M3 2v10l7-5zM11 2v10"].map((d, k) => (
          <button key={k} aria-label={["First sheet", "Previous sheet", "Next sheet", "Last sheet"][k]} className="flex w-[22px] justify-center">
            <svg viewBox="0 0 14 14" className="h-3 w-3" fill="#a6a6a6" stroke="#a6a6a6"><path d={d} /></svg>
          </button>
        ))}
        <button aria-label="Add sheet" className="ml-[10px]"><Ic className="h-[14px] w-[14px]" vb="0 0 14 14" sw={3}><path d="M7 0v14M0 7h14" /></Ic></button>
        <button className="ml-[11px] h-[22px] w-[50px] border-b-[3px] border-[#666] bg-white font-semibold">JIRA</button>
        <button className="ml-3">Work Sheet</button>
        <span className="ml-3 h-3 w-px bg-[#999]" />
      </div>

      <div className={"flex h-[39px] shrink-0 items-center border-b border-[#a0a0a0] pl-3 text-xs text-black " + SEG}>
        <button aria-label="Close Find Bar"><Ic className="h-[18px] w-[18px]" vb="0 0 18 18"><circle cx="9" cy="9" r="8.500" fill="#f2737a" stroke="#e0525a" /><path d="M5 5l8 8M13 5l-8 8" stroke="#fff" strokeWidth="2" /></Ic></button>
        <div className="relative ml-[7px] w-[249px]">
          <input aria-label="Find" placeholder="Find" className="h-6 w-full border border-[#7a7a7a] bg-white px-[2px] placeholder:text-[#8a8a8a]" />
          <DropBox />
        </div>
        <button aria-label="Find Previous" className="ml-2"><Ic className="h-3 w-5 text-[#b4b4b4]" vb="0 0 20 12"><path d="M1 11h18l-9-10z" /></Ic></button>
        <button aria-label="Find Next" className="ml-[13px]"><Ic className="h-3 w-5 text-[#b4b4b4]" vb="0 0 20 12"><path d="M1 1h18l-9 10z" /></Ic></button>
        <button className="ml-2 text-[11px] text-[#8a8a8a]">Find All</button>
        <label className="ml-2 flex items-center gap-1 text-[11px]"><input type="checkbox" className="h-[13px] w-[13px] appearance-none border border-[#333] bg-white" />Formatted Display</label>
        <label className="ml-1 flex items-center gap-1 text-[11px]"><input type="checkbox" className="h-[13px] w-[13px] appearance-none border border-[#333] bg-white" />Match Case</label>
        <span className="ml-2 h-5 w-px bg-[#c4c4c4]" />
        <button aria-label="Find and Replace" className="mx-[11px] text-[#3a3a38]"><Ic className="h-[22px] w-[22px]">{findIcon}</Ic></button>
        <span className="h-5 w-px bg-[#c4c4c4]" />
      </div>

      <footer className={"flex h-[21px] shrink-0 items-center text-[11px] text-black " + SEG}>
        <span className="w-[278px] pl-[11px]">Sheet 1 of 2</span><VSep />
        <span className="w-[354px]" /><VSep />
        <span className="w-[253px] pl-[9px]">Default</span><VSep />
        <span className="w-[290px] text-center">English (India)</span><VSep />
        <span className="w-[68px]" /><VSep />
        <span className="flex w-[29px] justify-center"><Ic className="h-[13px] w-4" vb="0 0 16 13"><path d="M1 3h8v7H1z" stroke={B} strokeWidth="1.600" /><path d="M11 1h4M13 1v11M11 12h4" /></Ic></span><VSep />
        <span className="flex w-[30px] justify-center"><Ic className="h-[11px] w-[11px]" vb="0 0 12 12"><path d="M1 1h10v10H1zM4 1v4h4V1M4 11V8h4v3" stroke="#d9231c" strokeWidth="1.500" /></Ic></span><VSep />
        <span className="w-7" /><VSep />
        <span className="flex-1 text-center">Average: ; Sum: 0</span><VSep />
        <div className="flex w-[144px] items-center justify-center gap-1 text-[#333]">
          <button aria-label="Zoom Out"><Ic className="h-[10px] w-[10px]" vb="0 0 10 10" sw={2}><path d="M0 5h10" /></Ic></button>
          <input aria-label="Zoom" type="range" defaultValue="50" className="h-[3px] w-[98px] appearance-none bg-[#777] [&::-webkit-slider-thumb]:h-[11px] [&::-webkit-slider-thumb]:w-1 [&::-webkit-slider-thumb]:appearance-none [&::-webkit-slider-thumb]:border [&::-webkit-slider-thumb]:border-[#555] [&::-webkit-slider-thumb]:bg-[#e8e8e8]" />
          <button aria-label="Zoom In"><Ic className="h-[10px] w-[10px]" vb="0 0 10 10" sw={2}><path d="M0 5h10M5 0v10" /></Ic></button>
        </div><VSep />
        <span className="w-[45px] pl-[7px]">100%</span>
      </footer>
    </section>
  );
}

/* ---------- Windows taskbar ---------- */
const svg = (kids, vb = "0 0 24 24") => <svg viewBox={vb} className="h-6 w-6 overflow-visible" aria-hidden="true">{kids}</svg>;
const APPS = [
  ["Edge", 1, svg(<><path d="M1 12C1 5 6 0 12.500 0 19 0 24 5 24 10.500c0 4-3 6-6 6s-4-1.200-4-2.500c0-1 1-1.500 1-3 0-2-2-3.500-4.500-3.500C5 7.500 1 11 1 14z" fill="#35c1e8" /><path d="M12.500 0C19 0 24 5 24 10.500c0 4-3 6-6 6s-4-1.200-4-2.500c0-1 1-1.500 1-3" fill="#5bd66a" opacity=".75" /><path d="M1 12c0 7 4 12 11 12 5 0 8-2 9.500-5-8 3-14-1-12-8C4 10 1 12 1 14z" fill="#1565c0" /><path d="M0 16h11v8H0z" fill="#b86a1a" /><path d="M0 16h11v4H0z" fill="#e59a2d" /></>)],
  ["File Explorer", 2, svg(<><path d="M1 3h8l2 3h12v4H1z" fill="#e8a623" /><path d="M1 7h22v14H1z" fill="#ffd768" /><path d="M5 22v-8h14v8h-4v-4H9v4z" fill="#3f9be6" /></>)],
  ["Microsoft Store", 0, svg(<><path d="M7 7V2h10v5" fill="none" stroke="#1cb1ee" strokeWidth="2" /><path d="M1 6h22v15a3 3 0 0 1-3 3H4a3 3 0 0 1-3-3z" fill="#f3f3f3" /><path d="M7 9.500h4.500V14H7z" fill="#f25022" /><path d="M12.500 9.500H17V14h-4.500z" fill="#7fba00" /><path d="M7 15h4.500v4.500H7z" fill="#00a4ef" /><path d="M12.500 15H17v4.500h-4.500z" fill="#ffb900" /></>)],
  ["Chrome", 0, svg(<><circle cx="12" cy="12" r="12" fill="#fcc934" /><path d="M12 12L1.600 6A12 12 0 0 1 22.400 6z" fill="#ea4335" /><path d="M12 12L1.600 6A12 12 0 0 0 11 24l5-9z" fill="#34a853" /><circle cx="12" cy="12" r="6" fill="#fff" /><circle cx="12" cy="12" r="4.700" fill="#4285f4" /></>)],
  ["Internet Explorer", 0, svg(<><path d="M20 15.500a7.500 7.500 0 1 1 .5-3.500H6" fill="none" stroke="#39b5ee" strokeWidth="4" /><path d="M3 21C-1 17 8 5 17 2c4-1.500 6 0 4 4" fill="none" stroke="#f7c930" strokeWidth="1.600" /></>)],
  ["Performance Monitor", 1, svg(<><path d="M5 1l18 2-1 14-18-1z" fill="#d9dcdf" /><path d="M7 4l13 1-.5 9L6.500 13z" fill="#fff" /><path d="M7 10l3-1 2-4 2 6 2-3h3" fill="none" stroke="#3f9be6" strokeWidth="1.300" /><path d="M1 3h5v17H1zM9 18h8v5H9z" fill="#aeb3b8" /></>)],
  ["LibreOffice Calc", 1, svg(<><path d="M2 0h12l8 9v13a2 2 0 0 1-2 2H4a2 2 0 0 1-2-2z" fill="#1b9a2f" /><path d="M15 0h7v8z" fill="#57d468" /><path d="M6 11h8v8H6zM6 15h12v5h-6M10 11v8" fill="none" stroke="#e8ffe9" strokeWidth="1.500" /></>)],
  ["Teams", 1, svg(<><circle cx="14" cy="3.500" r="3.500" fill="#7b83eb" /><circle cx="21" cy="5" r="2.500" fill="#5059c9" /><path d="M11 8h13v9H11z" fill="#5059c9" /><path d="M0 6h13v13H0z" fill="#4b53bc" /><text x="3" y="15" fontSize="11" fontWeight="700" fill="#fff" fontFamily="Open Sans, sans-serif">T</text><rect x="6" y="16" width="18" height="8" rx="2" fill="#26dfe8" /><text x="7" y="22.500" fontSize="7" fontWeight="700" fill="#000" fontFamily="Open Sans, sans-serif">NEW</text></>)],
  ["ThickClientAutomation", 1, <Gear className="h-[22px] w-[22px]" />],
  ["Valerus Client", 3, svg(<><rect width="24" height="24" rx="2" fill="#2d2d3d" /><rect x="4.500" y="4.500" width="15" height="12" rx="2" fill="none" stroke="#5488d0" strokeWidth="1.600" /><path d="M9 7l3 3 3-3M9 14l3-3 3 3M8 10.500h8M12 17v3M8 20h8" fill="none" stroke="#5488d0" strokeWidth="1.300" /></>)],
];

function TaskApps() {
  return APPS.map(([n, s, icon]) => (
    <button key={n} aria-label={n} className={"relative flex h-10 w-[49px] items-center justify-center " + (s === 3 ? "bg-[#474748]" : "")}>
      {icon}
      {s > 0 && <span className={"absolute bottom-0 h-[2px] bg-[#76b9ed] " + (s === 3 ? "inset-x-0" : "inset-x-1")} />}
      {s === 2 && <span className="absolute bottom-0 right-1 h-[2px] w-[9px] bg-[#48709a]" />}
    </button>
  ));
}
const Start = () => (
  <button aria-label="Start" className="flex h-10 w-12 items-center justify-center">
    <svg viewBox="0 0 16 16" className="h-4 w-4" fill="#fff"><path d="M0 2.200l6.500-.9v6.200H0zM7.500 1.200L16 0v7.500H7.500zM0 8.500h6.500v6.200L0 13.800zM7.500 8.500H16V16l-8.500-1.200z" /></svg>
  </button>
);
const TaskView = () => (
  <button aria-label="Task View" className="mr-[2px] flex h-10 w-12 items-center justify-center text-white">
    <Ic className="h-4 w-4" vb="0 0 16 16"><path d="M1 0v2.500h10V0M1 16v-2.500h10V16M1 5h10v6H1zM14.500 0v4M14.500 6v4M14.500 12v4" /></Ic>
  </button>
);
const Clock = ({ width }) => (
  <div className={"flex flex-col whitespace-nowrap text-center text-[11px] leading-[17px] " + width}><span>12:44 PM</span><span>03-10-2023</span></div>
);

function LeftTaskbar() {
  return (
    <div className={"flex h-10 min-w-0 flex-1 items-center text-white " + SEG}>
      <Start />
      <label className="flex h-10 w-[288px] items-center border border-[#b5b5b5] bg-[#f1f1f1] pl-[11px] pr-[3px] text-black">
        <Ic className="h-[17px] w-[17px]" vb="0 0 17 17" sw={1.3}><circle cx="10.500" cy="6.500" r="5.500" /><path d="M6.500 10.500L1 16" /></Ic>
        <input aria-label="Type here to search" placeholder="Type here to search" className="ml-[11px] w-[173px] bg-transparent text-sm placeholder:text-[#333]" />
        <span className="flex h-8 flex-1 items-center justify-center rounded-lg bg-[#e0e0e0]">
          <svg viewBox="0 0 30 25" className="h-[25px] w-[30px]"><path d="M10 5V1.500h10V5" fill="none" stroke="#4a3b2a" strokeWidth="2" /><rect y="4" width="30" height="21" rx="2" fill="#b96a05" /><path d="M0 6a2 2 0 0 1 2-2h26a2 2 0 0 1 2 2v9H0z" fill="#f09a1a" /><rect x="12.500" y="12.500" width="5" height="5" fill="#ffd52e" /></svg>
        </span>
      </label>
      <TaskView />
      <TaskApps />
      <div className="ml-auto flex items-center text-sm">
        <svg viewBox="0 0 22 20" className="mr-2 h-5 w-[22px]"><circle cx="9.500" cy="10" r="9.500" fill="#f7941d" /><path d="M9 16a3 3 0 0 1 .5-6 4.500 4.500 0 0 1 8 0 3 3 0 0 1 1.500 6z" fill="#c4dcfa" /></svg>
        <span className="whitespace-pre text-[13px]">27°C  Mostly sunny</span>
        <Chev className="ml-6 h-3 w-3" d={UP} />
        <Ic className="ml-[10px] h-4 w-4" vb="0 0 16 16"><path d="M1 1h5v5H1zM6 3h9v8H3V6M9 11v4M5 15h8" /></Ic>
        <Ic className="ml-2 h-4 w-4" vb="0 0 16 16"><path d="M1 6h2l3-3v10l-3-3H1zM8.500 5.500a4 4 0 0 1 0 5M10.500 3.500a7 7 0 0 1 0 9M12.500 1.500a10 10 0 0 1 0 13" /></Ic>
        <span className="ml-[10px] text-xs">ENG</span>
        <Clock width="ml-3 w-[60px]" />
        <Ic className="ml-[15px] mr-5 h-[17px] w-4" vb="0 0 16 17"><path d="M1 1h14v12h-5l-2 3-2-3H1z" /></Ic>
        <span className="mr-1 h-10 w-px bg-[#777]" />
      </div>
    </div>
  );
}
function RightTaskbar() {
  return (
    <div className={"flex h-10 min-w-0 flex-1 items-center text-white " + SEG}>
      <Start />
      <button aria-label="Search" className="flex h-10 w-12 items-center justify-center">
        <Ic className="h-[23px] w-[23px]" vb="0 0 24 24" sw={2}><circle cx="14.500" cy="9" r="7.500" /><path d="M9 15l-8 8" /></Ic>
      </button>
      <TaskView />
      <TaskApps />
      <Clock width="ml-auto mr-1 w-16" />
    </div>
  );
}

export default function App() {
  return (
    <div className="flex h-screen min-h-[600px] flex-col overflow-hidden">
      <div className="flex min-h-0 flex-1">
        <Valerus />
        <Calc />
      </div>
      <div className="flex h-10 shrink-0 bg-[#1e1e1e]">
        <LeftTaskbar />
        <RightTaskbar />
      </div>
    </div>
  );
}
